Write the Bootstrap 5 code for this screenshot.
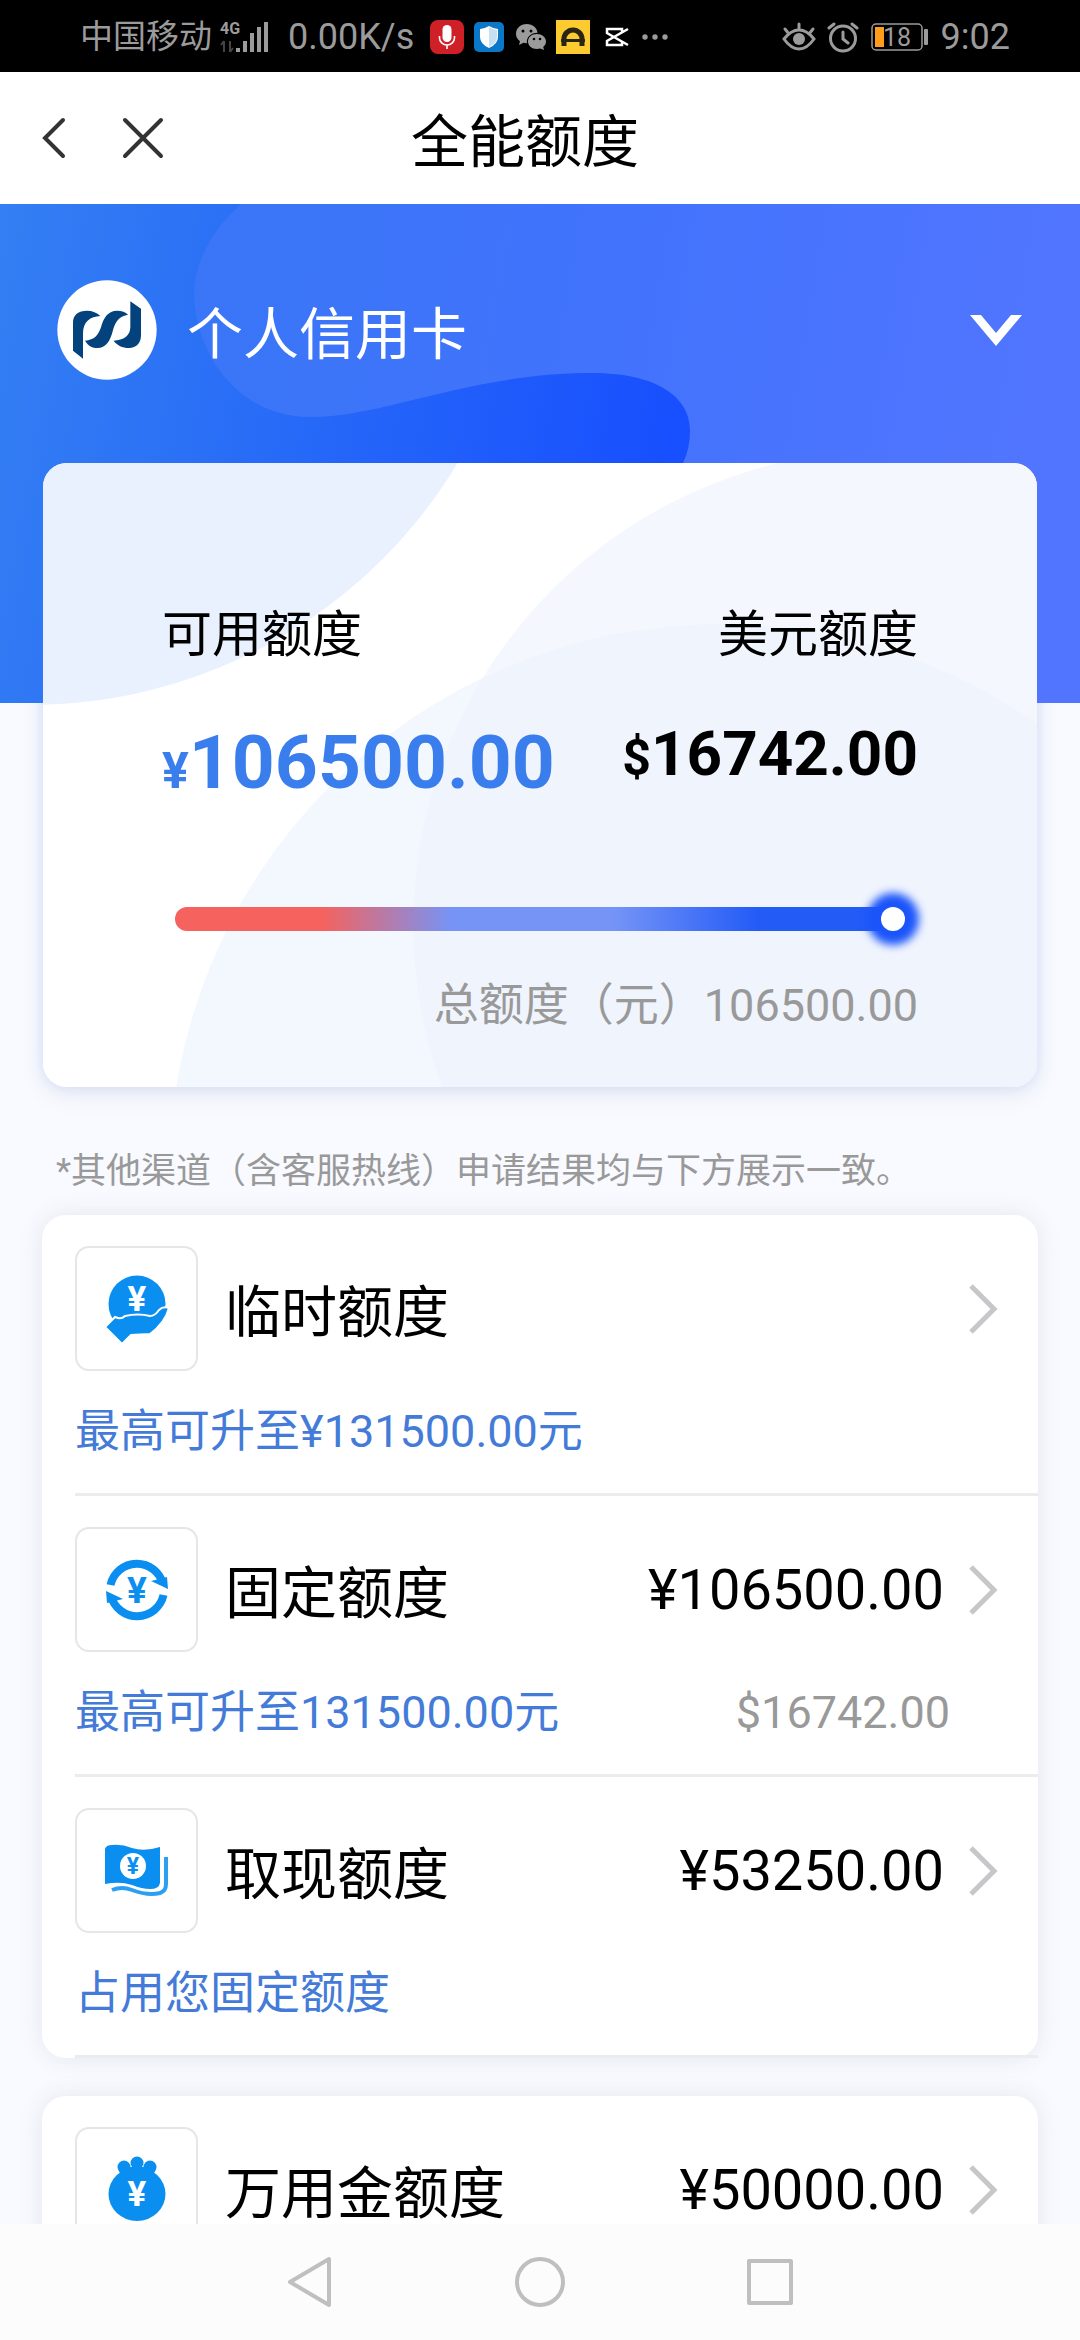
<!DOCTYPE html>
<html lang="zh-CN">
<head>
<meta charset="utf-8">
<meta name="viewport" content="width=device-width, initial-scale=1">
<title>全能额度</title>
<link href="https://cdn.jsdelivr.net/npm/bootstrap@5.3.0/dist/css/bootstrap.min.css" rel="stylesheet">
<style>
  body { font-family: Roboto, "Noto Sans CJK SC", sans-serif; background: #f8faff; color: #000; height: 100vh; }
  svg { display: block; flex-shrink: 0; }
  .statusbar { height: 72px; background: #000; color: #9b9b9b; padding: 2px 70px 0 80px; font-size: 36px; line-height: 48px; }
  .carrier { font-size: 33px; }
  .titlebar { height: 132px; background: #fff; padding-left: 42px; padding-right: 210px; }
  .titlebar-tools { width: 138px; gap: 56px; }
  .plain-btn { border: 0; background: none; padding: 0; color: inherit; }
  .page-title { font-size: 57px; line-height: 64px; padding-top: 10px; }
  .hero { padding: 76px 57px 323px; }
  .hero-bg { position: absolute; inset: 0; width: 100%; height: 100%; }
  .account-name { font-size: 56px; line-height: 64px; padding-top: 10px; margin-left: 30px; }
  .panel { margin: 0 42px; border: 0; border-radius: 24px; background: #fff; box-shadow: 0 0 24px rgba(60, 60, 90, .10); }
  .quota-panel { margin: -240px 43px 0; border-radius: 24px; box-shadow: 0 8px 24px rgba(60, 60, 90, .08), 0 0 14px rgba(170, 200, 255, .40); }
  .quota { padding: 142px 119px 51px; overflow: hidden; border-radius: 24px; }
  .label-lg { font-size: 50px; line-height: 60px; margin-bottom: 57px; }
  .amount-main { font-size: 75px; line-height: 80px; font-weight: 700; color: #3a7eed; }
  .amount-usd { font-size: 62px; line-height: 64px; font-weight: 700; }
  .currency { font-size: 50px; line-height: 1; }
  .usage { margin: 105px 13px 45px; height: 24px; appearance: none; -webkit-appearance: none; padding: 0; border-radius: 12px; display: block;
    background: linear-gradient(90deg, #f6625d 0%, #f6625d 20%, #7594f6 38%, #7594f6 60%, #235bf7 80%, #235bf7 100%); }
  .usage::-webkit-slider-runnable-track { height: 24px; background: transparent; }
  .usage::-webkit-slider-thumb { -webkit-appearance: none; width: 24px; height: 24px; margin: 0; border: 0; border-radius: 50%; background: #fff; box-shadow: 0 0 8px 14px #1b55fa; }
  .text-md { font-size: 45px; line-height: 60px; }
  .grey { color: #999; }
  .blue { color: #447bd8; }
  .notice { font-size: 35px; line-height: 50px; margin: 60px 56px 18px; color: #999; }
  .limit { display: block; margin-left: 33px; padding: 31px 40px 31px 0; border-bottom: 3px solid #ececee; color: #000; text-decoration: none; }
  .icon-tile { width: 123px; height: 125px; border: 2px solid #e6e6e6; border-radius: 14px; }
  .limit-name { font-size: 56px; line-height: 60px; padding-top: 8px; margin-left: 27px; }
  .limit-value { font-size: 56px; line-height: 64px; margin-right: 24px; }
  .limit-sub { margin-top: 31px; padding-right: 48px; }
  .second { margin-top: 38px; }
  .navkeys { height: 116px; background: #fcfcfc; gap: 180px; }
  .svg-bold { font-family: Roboto, sans-serif; font-weight: 700; text-anchor: middle; }
</style>
<script src="https://cdn.jsdelivr.net/npm/bootstrap@5.3.0/dist/js/bootstrap.bundle.min.js"></script>
</head>
<body class="d-flex flex-column overflow-hidden">

<div class="statusbar d-flex align-items-center flex-shrink-0">
  <span class="carrier">中国移动</span>
  <svg class="ms-2" width="52" height="36" viewBox="0 0 52 36" fill="#9b9b9b">
    <text x="0" y="15" font-size="16" font-weight="700" font-family="Roboto">4G</text>
    <path d="M4 22v11M1 26l3-4M10 22v11M13 29l-3 4" stroke="#444" stroke-width="2" fill="none"/>
    <path d="M16 29h4v4h-4zM23 22h4v11h-4zM30 14h4v19h-4zM37 8h4v25h-4zM44 3h4v30h-4z"/>
  </svg>
  <span class="ms-3">0.00K/s</span>
  <div class="d-flex align-items-center ms-3" style="gap:10px">
    <svg width="34" height="34" viewBox="0 0 34 34"><rect width="34" height="34" rx="8" fill="#cf2027"/><rect x="12.500" y="5" width="9" height="17" rx="4.500" fill="#fff"/><path d="M9.500 16v2a7.500 7 0 0 0 15 0v-2M17 25v4" fill="none" stroke="#fff" stroke-width="1.600"/></svg>
    <svg width="30" height="30" viewBox="0 0 30 30"><rect width="30" height="30" rx="5" fill="#0b77c9"/><path d="M15 4q5 3 9 3v8q0 7-9 11q-9-4-9-11V7q4 0 9-3z" fill="#fff"/><path d="M15 5v20q8-4 8-10V8q-4 0-8-3z" fill="#c8dff2"/></svg>
    <svg width="32" height="28" viewBox="0 0 32 28"><path d="M13 1C6 1 2 5.500 2 11c0 3 1.500 5.500 4 7.200L5 22l4.500-2.200c1 .2 2 .4 3.500.4-1-6 4-10.500 10.500-10.500C23 4.500 18.500 1 13 1z" fill="#9b9b9b"/><path d="M23 11c-5.500 0-9 3.500-9 7.500s3.500 7.500 9 7.500c1.200 0 2.200-.2 3.200-.5L30 27l-.8-3c1.800-1.400 2.800-3.300 2.800-5.500 0-4-4-7.500-9-7.500z" fill="#9b9b9b"/><g fill="#000"><circle cx="9" cy="8" r="1.500"/><circle cx="17" cy="8" r="1.500"/><circle cx="20" cy="16" r="1.300"/><circle cx="26" cy="16" r="1.300"/></g></svg>
    <svg width="34" height="34" viewBox="0 0 34 34"><rect width="34" height="34" fill="#fccb2f"/><path d="M8 26V19a9 9 0 0 1 18 0v7" fill="none" stroke="#2a2413" stroke-width="5"/><path d="M5 19h24v3H5z" fill="#2a2413"/></svg>
    <svg width="30" height="20" viewBox="0 0 30 20" fill="none" stroke="#fff" stroke-width="2.500"><path d="M28 2L7 14V18H22V14M28 18L7 6V2H22V6"/></svg>
    <svg width="32" height="10" viewBox="0 0 32 10" fill="#9b9b9b"><circle cx="5" cy="5" r="2.700"/><circle cx="15" cy="5" r="2.700"/><circle cx="25" cy="5" r="2.700"/></svg>
  </div>
  <div class="d-flex align-items-center ms-auto" style="gap:11px">
    <svg width="34" height="32" viewBox="0 0 34 32" fill="none" stroke="#9b9b9b" stroke-width="3" stroke-linecap="round"><path d="M2 18Q9 9 17 9t15 9q-7 10-15 10T2 18zM17 3v5M3 8l4 5M31 8l-4 5"/><circle cx="17" cy="18" r="6" fill="#9b9b9b" stroke="none"/></svg>
    <svg width="32" height="32" viewBox="0 0 32 32" fill="none" stroke="#9b9b9b" stroke-width="3" stroke-linecap="round"><circle cx="16" cy="17.500" r="12.500"/><path d="M16 11v7l5 4M2 7l5-4M30 7l-5-4"/></svg>
    <svg width="60" height="28" viewBox="0 0 60 28"><rect x="2" y="1" width="50" height="26" rx="4" fill="none" stroke="#9b9b9b" stroke-width="1.500"/><rect x="5" y="4" width="9" height="20" fill="#ff9c1a"/><rect x="54" y="6" width="4" height="16" rx="1" fill="#9b9b9b"/><text x="27" y="23" font-size="25" font-family="Roboto" text-anchor="middle" fill="#9b9b9b">18</text></svg>
    <span>9:02</span>
  </div>
</div>

<header class="titlebar d-flex align-items-center flex-shrink-0">
  <div class="titlebar-tools d-flex align-items-center">
    <button class="plain-btn" type="button" aria-label="返回"><svg width="24" height="42" viewBox="0 0 24 42" fill="none" stroke="#333" stroke-width="4" stroke-linecap="round"><path d="M21 3L3 21l18 18"/></svg></button>
    <button class="plain-btn" type="button" aria-label="关闭"><svg width="42" height="42" viewBox="0 0 42 42" fill="none" stroke="#333" stroke-width="4" stroke-linecap="round"><path d="M3 3l36 36M39 3L3 39"/></svg></button>
  </div>
  <h1 class="page-title flex-grow-1 text-center fw-normal mb-0">全能额度</h1>
</header>

<main class="flex-grow-1 overflow-hidden">
  <section class="hero position-relative">
    <svg class="hero-bg" viewBox="0 0 1080 499" preserveAspectRatio="none">
      <defs>
        <linearGradient id="deep" gradientUnits="userSpaceOnUse" x1="0" y1="0" x2="690" y2="120"><stop offset="0" stop-color="#347ff3"/><stop offset=".35" stop-color="#2a6ff6"/><stop offset="1" stop-color="#184ffe"/></linearGradient>
        <linearGradient id="soft" gradientUnits="userSpaceOnUse" x1="190" y1="0" x2="1080" y2="150"><stop offset="0" stop-color="#3976f6"/><stop offset=".45" stop-color="#4173fc"/><stop offset="1" stop-color="#5275ff"/></linearGradient>
      </defs>
      <rect width="1080" height="499" fill="url(#deep)"/>
      <path d="M241 0C210 28 194 60 194 92C198 160 245 213 310 213C385 213 470 169 592 169C660 169 690 195 690 226Q690 245 683 259L640 499H1080V0Z" fill="url(#soft)"/>
    </svg>
    <button class="plain-btn position-relative d-flex align-items-center w-100 text-white" type="button">
      <svg width="100" height="100" viewBox="0 0 300 300"><circle cx="150" cy="150" r="149" fill="#fff"/><g fill="#03427c"><path d="M48 212V128C48 104 64 92 90 92C106 92 120 98 130 108C100 110 78 124 78 160V236Z"/><path d="M84 182C112 180 124 166 132 142C140 112 154 92 180 92C194 92 206 96 213 104C188 108 176 122 168 150C160 184 146 204 122 204C106 204 94 198 84 182Z"/><path d="M220 64L252 86V166C252 190 238 204 216 204C196 204 180 196 170 182C200 180 220 168 220 140Z"/></g></svg>
      <span class="account-name">个人信用卡</span>
      <svg class="ms-auto" width="54" height="34" viewBox="0 0 54 34"><path d="M1 2h11l15 18L42 2h11L27 33Z" fill="#fff"/></svg>
    </button>
  </section>

  <section class="quota-panel">
    <div class="quota position-relative">
      <svg class="hero-bg" viewBox="0 0 993 624" preserveAspectRatio="none">
        <defs><clipPath id="arcA"><circle cx="845" cy="462" r="475"/></clipPath></defs>
        <rect width="993" height="624" fill="#fff"/>
        <circle cx="-13" cy="-256" r="498" fill="#eaf1fe"/>
        <circle cx="845" cy="462" r="475" fill="#f4f8fe"/>
        <path d="M845-13H993V80Z" fill="#f4f8fe"/>
        <circle cx="677" cy="712" r="551" fill="#f3f7fe"/>
        <circle cx="677" cy="712" r="551" fill="#f0f4fd" clip-path="url(#arcA)"/>
      </svg>
      <div class="position-relative">
        <div class="d-flex justify-content-between">
          <div>
            <div class="label-lg">可用额度</div>
            <div class="amount-main"><span class="currency">¥</span>106500.00</div>
          </div>
          <div class="text-end">
            <div class="label-lg">美元额度</div>
            <div class="amount-usd"><span class="currency">$</span>16742.00</div>
          </div>
        </div>
        <div class="d-flex"><input class="usage flex-grow-1" type="range" min="0" max="106500" value="106500" aria-label="可用额度"></div>
        <div class="text-md grey text-end">总额度（元）106500.00</div>
      </div>
    </div>
  </section>

  <p class="notice">*其他渠道（含客服热线）申请结果均与下方展示一致。</p>

  <section class="panel">
    <a class="limit" href="#">
      <div class="d-flex align-items-center">
        <span class="icon-tile d-flex align-items-center justify-content-center">
          <svg width="70" height="70" viewBox="0 0 70 70" fill="#0a8ff0"><circle cx="35" cy="30" r="28.500"/><text class="svg-bold" x="35" y="37" font-size="35" fill="#fff">¥</text><path d="M3 53L13 43Q19 46 23 42Q36 39 48 42Q53 42 57 36Q61 32 67 34Q63 49 48 60L29 61L20 70Z" stroke="#fff" stroke-width="2"/></svg>
        </span>
        <span class="limit-name">临时额度</span>
        <svg class="ms-auto" width="30" height="50" viewBox="0 0 30 50" fill="none" stroke="#c7c7ca" stroke-width="5"><path d="M3 2l23 23L3 48"/></svg>
      </div>
      <div class="limit-sub text-md blue">最高可升至¥131500.00元</div>
    </a>
    <a class="limit" href="#">
      <div class="d-flex align-items-center">
        <span class="icon-tile d-flex align-items-center justify-content-center">
          <svg width="70" height="70" viewBox="0 0 70 70" fill="#0a8ff0"><g id="turn"><path d="M8.500 30A27 27 0 0 1 61 29" fill="none" stroke="#0a8ff0" stroke-width="8"/><path d="M49 26L65 22L66 34Z"/></g><use href="#turn" transform="rotate(180 35 35)"/><text class="svg-bold" x="35" y="48" font-size="37">¥</text></svg>
        </span>
        <span class="limit-name">固定额度</span>
        <span class="limit-value ms-auto">¥106500.00</span>
        <svg width="30" height="50" viewBox="0 0 30 50" fill="none" stroke="#c7c7ca" stroke-width="5"><path d="M3 2l23 23L3 48"/></svg>
      </div>
      <div class="limit-sub text-md d-flex justify-content-between"><span class="blue">最高可升至131500.00元</span><span class="grey">$16742.00</span></div>
    </a>
    <a class="limit" href="#">
      <div class="d-flex align-items-center">
        <span class="icon-tile d-flex align-items-center justify-content-center">
          <svg width="70" height="70" viewBox="0 0 70 70" fill="#0a8ff0"><path d="M3 13Q4 9 10 9Q20 8 30 12Q42 16 58 11V47Q57 53 48 53Q40 53 30 49Q18 45 3 48Z"/><path d="M10 54Q20 50 30 54Q46 60 58 57Q64 55 64 48V21" fill="none" stroke="#2ba0f3" stroke-width="4"/><circle cx="31" cy="30" r="13" fill="#fff"/><text class="svg-bold" x="31" y="38" font-size="23">¥</text></svg>
        </span>
        <span class="limit-name">取现额度</span>
        <span class="limit-value ms-auto">¥53250.00</span>
        <svg width="30" height="50" viewBox="0 0 30 50" fill="none" stroke="#c7c7ca" stroke-width="5"><path d="M3 2l23 23L3 48"/></svg>
      </div>
      <div class="limit-sub text-md blue">占用您固定额度</div>
    </a>
  </section>

  <section class="panel second">
    <a class="limit" href="#">
      <div class="d-flex align-items-center">
        <span class="icon-tile d-flex align-items-center justify-content-center">
          <svg width="70" height="70" viewBox="0 0 70 70" fill="#0a8ff0"><ellipse cx="35" cy="39" rx="28.500" ry="27"/><circle cx="22" cy="12" r="6.500"/><circle cx="35" cy="8" r="6.500"/><circle cx="48" cy="12" r="6.500"/><path d="M16 12h38q0 4-4 9H20q-4-5-4-9z"/><text class="svg-bold" x="35" y="51" font-size="35" fill="#fff">¥</text></svg>
        </span>
        <span class="limit-name">万用金额度</span>
        <span class="limit-value ms-auto">¥50000.00</span>
        <svg width="30" height="50" viewBox="0 0 30 50" fill="none" stroke="#c7c7ca" stroke-width="5"><path d="M3 2l23 23L3 48"/></svg>
      </div>
    </a>
  </section>
</main>

<nav class="navkeys d-flex align-items-center justify-content-center flex-shrink-0 position-relative">
  <button class="plain-btn" type="button" aria-label="返回"><svg width="50" height="52" viewBox="0 0 50 52" fill="none" stroke="#bfbfbf" stroke-width="4" stroke-linejoin="round"><path d="M44 3v46L5 26z"/></svg></button>
  <button class="plain-btn" type="button" aria-label="主页"><svg width="50" height="52" viewBox="0 0 50 52" fill="none" stroke="#bfbfbf" stroke-width="4"><circle cx="25" cy="26" r="23"/></svg></button>
  <button class="plain-btn" type="button" aria-label="最近任务"><svg width="50" height="52" viewBox="0 0 50 52" fill="none" stroke="#bfbfbf" stroke-width="4" stroke-linejoin="round"><path d="M4 5h42v42H4z"/></svg></button>
</nav>
</body>
</html>
